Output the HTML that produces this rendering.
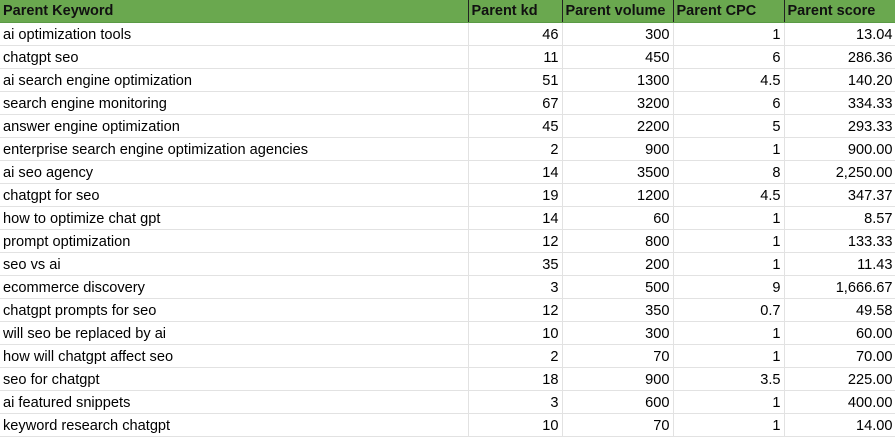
<!DOCTYPE html>
<html><head><style>
*{margin:0;padding:0;box-sizing:border-box}
body{width:895px;height:436px;overflow:hidden;background:#fff;font-family:"Liberation Sans",Arial,sans-serif;font-size:14.6px;color:#000}
table{border-collapse:collapse;table-layout:fixed;width:896px}
td,th{height:23px;border-right:1px solid #e2e2e2;border-bottom:1px solid #e2e2e2;padding:2px 3px 0;white-space:nowrap;overflow:hidden;line-height:20px}
th{height:22px;line-height:22px;padding:0 3px;background:#6aa84f;text-align:left;font-weight:bold;color:#111;border-right:1px solid #222;border-bottom:1px solid #5a9a45;font-size:14.5px}
td{text-align:right}
td:first-child{text-align:left}
</style></head><body>
<table>
<colgroup><col style="width:468px"><col style="width:94px"><col style="width:111px"><col style="width:111px"><col style="width:112px"></colgroup>
<tr><th>Parent Keyword</th><th>Parent kd</th><th>Parent volume</th><th>Parent CPC</th><th>Parent score</th></tr>
<tr><td>ai optimization tools</td><td>46</td><td>300</td><td>1</td><td>13.04</td></tr>
<tr><td>chatgpt seo</td><td>11</td><td>450</td><td>6</td><td>286.36</td></tr>
<tr><td>ai search engine optimization</td><td>51</td><td>1300</td><td>4.5</td><td>140.20</td></tr>
<tr><td>search engine monitoring</td><td>67</td><td>3200</td><td>6</td><td>334.33</td></tr>
<tr><td>answer engine optimization</td><td>45</td><td>2200</td><td>5</td><td>293.33</td></tr>
<tr><td>enterprise search engine optimization agencies</td><td>2</td><td>900</td><td>1</td><td>900.00</td></tr>
<tr><td>ai seo agency</td><td>14</td><td>3500</td><td>8</td><td>2,250.00</td></tr>
<tr><td>chatgpt for seo</td><td>19</td><td>1200</td><td>4.5</td><td>347.37</td></tr>
<tr><td>how to optimize chat gpt</td><td>14</td><td>60</td><td>1</td><td>8.57</td></tr>
<tr><td>prompt optimization</td><td>12</td><td>800</td><td>1</td><td>133.33</td></tr>
<tr><td>seo vs ai</td><td>35</td><td>200</td><td>1</td><td>11.43</td></tr>
<tr><td>ecommerce discovery</td><td>3</td><td>500</td><td>9</td><td>1,666.67</td></tr>
<tr><td>chatgpt prompts for seo</td><td>12</td><td>350</td><td>0.7</td><td>49.58</td></tr>
<tr><td>will seo be replaced by ai</td><td>10</td><td>300</td><td>1</td><td>60.00</td></tr>
<tr><td>how will chatgpt affect seo</td><td>2</td><td>70</td><td>1</td><td>70.00</td></tr>
<tr><td>seo for chatgpt</td><td>18</td><td>900</td><td>3.5</td><td>225.00</td></tr>
<tr><td>ai featured snippets</td><td>3</td><td>600</td><td>1</td><td>400.00</td></tr>
<tr><td>keyword research chatgpt</td><td>10</td><td>70</td><td>1</td><td>14.00</td></tr>
</table>
</body></html>
